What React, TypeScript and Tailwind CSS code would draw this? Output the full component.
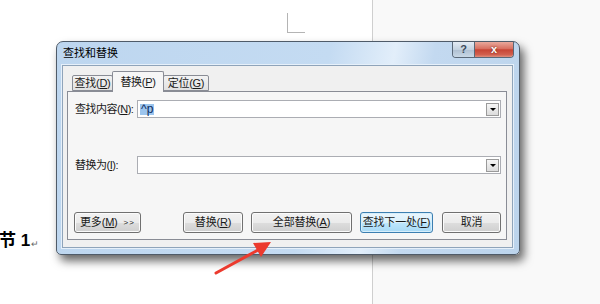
import type { ReactNode } from "react";

function WinButton({
  children,
  width,
  focused = false,
}: {
  children: ReactNode;
  width: string;
  focused?: boolean;
}) {
  return (
    <div
      className={
        width +
        " h-[21px] rounded-[3px] border flex items-center justify-center whitespace-nowrap text-[11px] tracking-[-0.2px] text-[#1a1a1a] " +
        (focused
          ? "border-[#3c7fb1] bg-[linear-gradient(#eaf6fd_0%,#d9f0fc_50%,#bee6fd_51%,#a7d9f5_100%)] shadow-[inset_0_0_0_1px_#d6eefb]"
          : "border-[#707070] bg-[linear-gradient(#f2f2f2_0%,#ebebeb_50%,#dddddd_51%,#cfcfcf_100%)] shadow-[inset_0_0_0_1px_#fbfbfb]")
      }
    >
      {children}
    </div>
  );
}

function ComboBox({ children }: { children?: ReactNode }) {
  return (
    <div className="flex-1 h-[18px] border border-[#abadb3] bg-white flex items-center pl-[1px] pr-[1px]">
      <div className="flex-1 flex items-center">{children}</div>
      <div className="w-[13px] h-[13px] border border-[#9a9a9a] bg-[linear-gradient(#f6f6f6,#dcdcdc)] flex items-center justify-center">
        <div className="w-0 h-0 border-l-[3px] border-r-[3px] border-t-[3px] border-l-transparent border-r-transparent border-t-black" />
      </div>
    </div>
  );
}

function Tab({
  label,
  mn,
  width,
  active = false,
}: {
  label: string;
  mn: string;
  width: string;
  active?: boolean;
}) {
  return (
    <div
      className={
        width +
        " flex items-center justify-center whitespace-nowrap text-[11px] tracking-[-0.3px] text-[#1a1a1a] border border-[#898c95] rounded-t-[2px] " +
        (active
          ? "h-[21px] -mb-px border-b-0 bg-[#f6f6f6] -mx-[1px] z-10 relative"
          : "h-[16px] bg-[linear-gradient(#f3f3f3,#e1e1e1)]")
      }
    >
      {label}(<u>{mn}</u>)
    </div>
  );
}

export default function App() {
  return (
    <div className="relative w-[600px] h-[304px] overflow-hidden flex font-['Liberation_Sans','Noto_Sans_CJK_SC',sans-serif]">
      <div className="w-[373px] h-full bg-white border-r border-[#cfcfcf]" />
      <div className="flex-1 h-full bg-[#f9f9f9]" />

      {/* margin corner mark */}
      <div className="absolute left-[287px] top-[13px] w-[18px] h-[20px] border-l border-b border-[#b4b4b4]" />

      {/* document text */}
      <div className="absolute left-[-1px] top-[232px] whitespace-nowrap text-[17px] font-bold text-black leading-none flex items-end">
        节 1<span className="text-[9px] font-normal text-[#666] ml-[1px]">↵</span>
      </div>

      {/* dialog window */}
      <div className="absolute left-[56px] top-[41px] w-[464px] h-[214px] rounded-t-[7px] rounded-b-[5px] border border-[#4f5b69] bg-[linear-gradient(100deg,#bdd6ef_0%,#c4dbf2_55%,#e2eefa_68%,#c3d9f0_76%,#bcd4ec_100%)] shadow-[4px_6px_10px_rgba(0,0,0,0.6)] flex flex-col pl-[5px] pr-[6px] pb-[6px]">
        <div className="relative h-[23px] flex items-center pl-[1px] whitespace-nowrap text-[11px] text-black">
          查找和替换
          <div className="absolute top-0 right-[-1px] flex h-[16px] rounded-b-[4px] overflow-hidden border border-t-0 border-[#5a6878]">
            <div className="w-[22px] h-full bg-[linear-gradient(#e3ebf4,#c4d2e0_50%,#aebfd1_51%,#c9d8e6)] border-r border-[#5a6878] flex items-center justify-center text-[11px] leading-none text-[#3d4b5b] font-bold">
              ?
            </div>
            <div className="w-[38px] h-full bg-[linear-gradient(#e9a99c,#d86f60_45%,#c74535_52%,#d2604f_85%,#e0907f)] flex items-center justify-center text-[11px] leading-none text-white font-bold [text-shadow:0_0_2px_#5a1a12]">
              x
            </div>
          </div>
        </div>

        <div className="flex-1 bg-[#f0f0f0] border border-[#8fa4ba] shadow-[0_0_0_1px_#e6f0fa] flex flex-col pt-[5px] pl-[4px] pr-[5px] pb-[7px]">
          <div className="flex items-end pl-[5px]">
            <Tab label="查找" mn="D" width="w-[41px]" />
            <Tab label="替换" mn="P" width="w-[52px]" active />
            <Tab label="定位" mn="G" width="w-[46px]" />
          </div>

          <div className="flex-1 border border-[#898c95] bg-[#f6f6f6] flex flex-col pt-[8px] pl-[7px] pr-[5px] pb-[6px] text-[11px] text-[#1a1a1a]">
            <div className="flex items-center">
              <div className="w-[62px] shrink-0 whitespace-nowrap tracking-[-0.5px]">
                查找内容(<u>N</u>):
              </div>
              <ComboBox>
                <span className="bg-[#9cc5ee] text-[#0c2b5e] leading-[11px] px-[1px] ml-[1px] text-[12px]">^p</span>
              </ComboBox>
            </div>

            <div className="flex items-center mt-[38px]">
              <div className="w-[62px] shrink-0 whitespace-nowrap tracking-[-0.5px]">
                替换为(<u>I</u>):
              </div>
              <ComboBox />
            </div>

            <div className="flex items-center mt-[38px] -ml-[1px]">
              <WinButton width="w-[67px]">
                更多(<u>M</u>)<span className="ml-[6px] text-[8px] tracking-[1px]">&gt;&gt;</span>
              </WinButton>
              <div className="flex-1" />
              <div className="flex items-center gap-[8px]">
                <WinButton width="w-[60px]">
                  替换(<u>R</u>)
                </WinButton>
                <WinButton width="w-[101px]">
                  全部替换(<u>A</u>)
                </WinButton>
                <WinButton width="w-[73px]" focused>
                  查找下一处(<u>F</u>)
                </WinButton>
                <div className="ml-[1px]">
                  <WinButton width="w-[59px]">取消</WinButton>
                </div>
              </div>
            </div>
          </div>
        </div>
      </div>

      {/* red arrow */}
      <svg className="absolute left-0 top-0" width="600" height="304" viewBox="0 0 600 304">
        <line x1="216" y1="273" x2="258" y2="250" stroke="#ec3a2e" strokeWidth="3" strokeLinecap="round" />
        <polygon points="271,242 253,243 261,257" fill="#ec3a2e" />
      </svg>
    </div>
  );
}
